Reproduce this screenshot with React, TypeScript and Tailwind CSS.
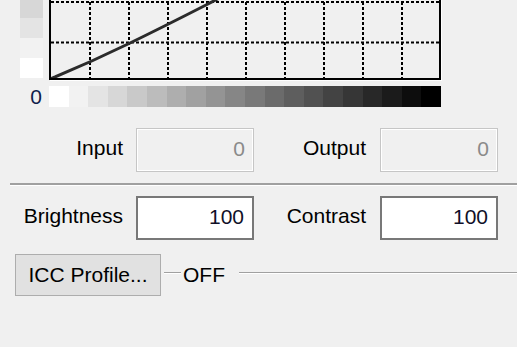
const BAR_STEPS = 20;
const shades = Array.from({ length: BAR_STEPS }, (_, i) => Math.round(255 - (i * 255) / (BAR_STEPS - 1)));

const STRIP = ["#bcbcbc", "#c9c9c9", "#d7d7d7", "#e4e4e4", "#f2f2f2", "#ffffff"];

function CurveGraph() {
  // inner drawing area, the top of the graph is scrolled out of view
  const cols = [39, 78, 117, 156, 195, 234, 273, 312, 351];
  const rows = [1, 40, 80.5];
  return (
    <svg width="388" height="116" className="block">
      {cols.map((x) => (
        <line key={x} x1={x} y1={0} x2={x} y2={116} stroke="#000" strokeWidth="2" strokeDasharray="3 2" />
      ))}
      {rows.map((y) => (
        <line key={y} x1={0} y1={y} x2={388} y2={y} stroke="#000" strokeWidth="2" strokeDasharray="3 2" />
      ))}
      <path
        d="M0 116.5 L4 115 Q40 100 77 82 T155 43 T205 10"
        fill="none"
        stroke="#2b2b2b"
        strokeWidth="3"
        strokeLinejoin="round"
        strokeLinecap="round"
      />
    </svg>
  );
}

function Field({ value, disabled }: { value: string; disabled?: boolean }) {
  return (
    <div
      className={
        disabled
          ? "w-[118px] h-full ml-[13px] flex items-center justify-end pr-[8px] pb-[3px] border border-[#c6c6c6] bg-[#f0f0f0] text-[#8a8a8a] shadow-[inset_1px_1px_0_#fff,inset_-1px_-1px_0_#fff]"
          : "w-[118px] h-full ml-[13px] flex items-center justify-end pr-[8px] pb-[3px] border-2 border-[#787878] bg-white text-[#101028]"
      }
    >
      {value}
    </div>
  );
}

function Row({ a, b, va, vb, disabled }: { a: string; b: string; va: string; vb: string; disabled?: boolean }) {
  return (
    <div className="flex items-stretch h-[44px]">
      <span className="w-[123px] text-right self-center pb-[5px]">{a}</span>
      <Field value={va} disabled={disabled} />
      <span className="w-[112px] text-right self-center pb-[5px]">{b}</span>
      <div className="ml-[1px] h-full flex">
        <Field value={vb} disabled={disabled} />
      </div>
    </div>
  );
}

export default function App() {
  return (
    <div className="w-[517px] h-[347px] overflow-hidden flex flex-col bg-[#f0f0f0] text-[21px] leading-[22px] text-black font-['Liberation_Sans',Arial,sans-serif]">
      {/* curve editor */}
      <div className="flex -mt-[40px]">
        <div className="w-[43px] h-[118px] flex flex-col pl-[20px]">
          <div className="h-[18px]" style={{ background: STRIP[0] }} />
          {STRIP.slice(1).map((c) => (
            <div key={c} className="h-[20px]" style={{ background: c }} />
          ))}
        </div>
        <div className="ml-[6px] w-[392px] h-[120px] border-2 border-black shadow-[1px_1px_0_#fff] overflow-hidden">
          <CurveGraph />
        </div>
      </div>

      {/* gray scale */}
      <div className="flex mt-[6px] h-[21px]">
        <span className="w-[43px] pr-[1px] text-right leading-[21px] text-[#10204a]">0</span>
        <div className="ml-[6px] w-[392px] flex">
          {shades.map((v, i) => (
            <div key={i} className="flex-1" style={{ background: `rgb(${v},${v},${v})` }} />
          ))}
        </div>
      </div>

      <div className="mt-[21px]">
        <Row a="Input" b="Output" va="0" vb="0" disabled />
      </div>

      <div className="mt-[11px] ml-[10px] border-t-2 border-t-[#a0a0a0] border-b border-b-white" />

      <div className="mt-[10px]">
        <Row a="Brightness" b="Contrast" va="100" vb="100" />
      </div>

      <div className="mt-[14px] flex h-[42px]">
        <button className="ml-[15px] w-[146px] h-full bg-[#e1e1e1] border border-[#adadad] text-black">
          ICC Profile...
        </button>
        <div className="flex-1 flex items-center">
          <div className="self-start mt-[18px] ml-[3px] w-[17px] border-t border-t-[#a0a0a0] border-b border-b-white" />
          <span className="ml-[2px]">OFF</span>
          <div className="self-start mt-[18px] ml-[14px] flex-1 border-t border-t-[#a0a0a0] border-b border-b-white" />
        </div>
      </div>
    </div>
  );
}
